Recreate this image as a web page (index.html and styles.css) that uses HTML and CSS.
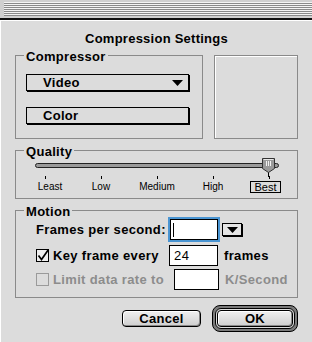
FILE: index.html
```html
<!DOCTYPE html>
<html>
<head>
<meta charset="utf-8">
<link rel="stylesheet" href="styles.css">
</head>
<body>
<div class="titlebar"><div class="stripes"></div></div>
<div class="dialog">
  <h1 class="title">Compression Settings</h1>
  <div class="top-row">
    <div class="group compressor">
      <span class="group-label">Compressor</span>
      <div class="popup">
        <span>Video</span>
        <svg class="popup-arrow" width="11" height="6" viewBox="0 0 11 6"><path d="M0 0H11L5.5 6Z" fill="#000"/></svg>
      </div>
      <div class="popup color-btn"><span>Color</span></div>
    </div>
    <div class="preview"></div>
  </div>

  <div class="group quality">
    <span class="group-label">Quality</span>
    <div class="slider">
      <div class="track"></div>
      <svg class="thumb" width="13" height="19" viewBox="0 0 13 19">
        <path d="M0.5 0.5H12.5V10.5L6.5 14.5L0.5 10.5Z" fill="#9a9a9a" stroke="#333"/>
        <path d="M1.5 1.5H11.5" stroke="#e8e8e8"/>
        <path d="M4.5 3V8M6.5 3V8M8.5 3V8" stroke="#f2f2f2"/>
        <path d="M6.5 14.5V19" stroke="#000"/>
      </svg>
    </div>
    <div class="ticks">
      <div class="tick first"><i></i><span>Least</span></div>
      <div class="tick"><i></i><span>Low</span></div>
      <div class="tick"><i></i><span>Medium</span></div>
      <div class="tick"><i></i><span>High</span></div>
      <div class="tick last"><i></i><span class="boxed">Best</span></div>
    </div>
  </div>

  <div class="group motion">
    <span class="group-label">Motion</span>
    <div class="row row-fps">
      <span class="label fps-label">Frames per second:</span>
      <div class="focus"><div class="field"><span class="caret"></span></div></div>
      <div class="mini-popup">
        <svg width="11" height="6" viewBox="0 0 11 6"><path d="M0 0H11L5.5 6Z" fill="#000"/></svg>
      </div>
    </div>
    <div class="row row-key">
      <svg class="check" width="14" height="13" viewBox="0 0 14 13">
        <rect x="0.5" y="0.5" width="12" height="12" fill="#eeeeee" stroke="#000"/>
        <path d="M2.5 6.5L5.5 10.5L12.5 0.5" fill="none" stroke="#000" stroke-width="1.7"/>
      </svg>
      <span class="label key-label">Key frame every</span>
      <div class="field field-key">24</div>
      <span class="unit">frames</span>
    </div>
    <div class="row row-limit disabled">
      <svg class="check" width="14" height="13" viewBox="0 0 14 13">
        <rect x="0.5" y="0.5" width="12" height="12" fill="none" stroke="#9a9a9a"/>
      </svg>
      <span class="label limit-label">Limit data rate to</span>
      <div class="field field-limit"></div>
      <span class="unit">K/Second</span>
    </div>
  </div>

  <div class="buttons">
    <div class="btn cancel">Cancel</div>
    <div class="default-ring"><div class="ring-inner"><div class="btn ok">OK</div></div></div>
  </div>
</div>
</body>
</html>
```

FILE: styles.css
```css
* { box-sizing: border-box; }
html, body { margin: 0; padding: 0; }
body {
  width: 312px;
  height: 342px;
  overflow: hidden;
  background: #dcdcdc;
  font-family: "Liberation Sans", Arial, sans-serif;
  color: #000;
}

.titlebar {
  height: 20px;
  background: #d0d0d0;
  border-bottom: 2px solid #111;
  padding: 2px 0 0 4px;
}
.stripes {
  height: 14px;
  background: repeating-linear-gradient(to bottom, #f4f4f4 0 1px, #8a8a8a 1px 2px);
}

.dialog {
  height: 322px;
  padding: 11px 14px 0 15px;
  box-shadow: inset 1px 1px 0 #fff;
}

.title {
  margin: 0;
  font-size: 13px;
  line-height: 16px;
  font-weight: bold;
  letter-spacing: 0.25px;
  text-align: center;
}

.top-row {
  display: flex;
  gap: 11px;
  margin-top: 8px;
}

.group {
  position: relative;
  border: 1px solid #8a8a8a;
}
.group-label {
  position: absolute;
  top: -6px;
  left: 8px;
  padding: 0 2px;
  background: #dcdcdc;
  font-size: 13px;
  line-height: 13px;
  font-weight: bold;
  letter-spacing: 0.3px;
}

.compressor {
  width: 188px;
  height: 84px;
  padding: 18px 0 0 10px;
}
.popup {
  width: 163px;
  height: 17px;
  border: 1px solid #000;
  box-shadow: 1px 1px 0 #000;
  display: flex;
  align-items: center;
  justify-content: space-between;
  padding: 0 5px 0 16px;
  font-size: 13px;
  line-height: 15px;
  font-weight: bold;
  letter-spacing: 0.3px;
}
.color-btn { margin-top: 16px; }

.preview {
  width: 84px;
  height: 84px;
  border: 1px solid #8a8a8a;
  box-shadow: inset 1px 1px 0 #fff;
}

.quality {
  margin-top: 11px;
  height: 49px;
}
.slider {
  position: relative;
  margin: 12px 0 0 19px;
  width: 244px;
  height: 5px;
}
.track {
  height: 5px;
  border: 1px solid #222;
  border-radius: 3px;
  background: #9a9a9a;
}
.thumb {
  position: absolute;
  left: 227px;
  top: -5px;
}
.ticks {
  display: grid;
  grid-template-columns: repeat(5, 56px);
  margin: 8px 0 0 1px;
}
.tick {
  display: flex;
  flex-direction: column;
  align-items: center;
}
.tick i {
  display: block;
  width: 1px;
  height: 3px;
  background: #000;
}
.tick span {
  margin-top: 2px;
  font-size: 10px;
  line-height: 12px;
}
.tick.first span { margin-left: 10px; }
.tick.last span { margin-right: 7px; }
.tick span.boxed {
  border: 1px solid #000;
  padding: 0 3px;
  line-height: 10px;
  font-size: 11px;
  background: #dcdcdc;
}

.motion {
  margin-top: 11px;
  height: 88px;
  padding: 6px 0 0 20px;
}
.row {
  display: flex;
  align-items: center;
  font-size: 13px;
  line-height: 16px;
  font-weight: bold;
  letter-spacing: 0.35px;
}
.row + .row { margin-top: 3px; }
.fps-label { width: 132px; }
.focus {
  border: 2px solid #4a95d2;
}
.field {
  width: 48px;
  height: 21px;
  border: 1px solid #000;
  background: #fff;
  display: flex;
  align-items: center;
  padding-left: 4px;
  font-weight: normal;
  letter-spacing: 0.5px;
}
.caret {
  display: block;
  width: 1px;
  height: 14px;
  margin-left: -2px;
  background: #000;
}
.mini-popup {
  margin-left: 2px;
  width: 20px;
  height: 13px;
  border: 1px solid #000;
  box-shadow: 1px 1px 0 #000;
  display: flex;
  align-items: center;
  justify-content: center;
  background: #e4e4e4;
}
.check { margin-right: 3px; flex: none; }
.key-label { width: 116px; }
.field-key { width: 49px; }
.limit-label { width: 121px; }
.field-limit { width: 45px; }
.unit { margin-left: 6px; }
.disabled { color: #8c8c8c; }

.buttons {
  display: flex;
  justify-content: flex-end;
  align-items: center;
  gap: 11px;
  margin-top: 7px;
}
.btn {
  height: 17px;
  border: 1px solid #000;
  border-radius: 4px;
  background: linear-gradient(#f0f0f0, #cfcfcf);
  box-shadow: inset -1px -1px 0 #8a8a8a, inset 1px 1px 0 #fff;
  font-size: 13px;
  line-height: 15px;
  font-weight: bold;
  letter-spacing: 0.3px;
  text-align: center;
}
.cancel { width: 79px; }
.ok { width: 76px; }
.default-ring {
  border: 1px solid #000;
  border-radius: 8px;
  padding: 2px;
  background: #7a7a7a;
}
.ring-inner {
  border: 1px solid #000;
  border-radius: 6px;
  padding: 1px;
  background: #dcdcdc;
}
```
